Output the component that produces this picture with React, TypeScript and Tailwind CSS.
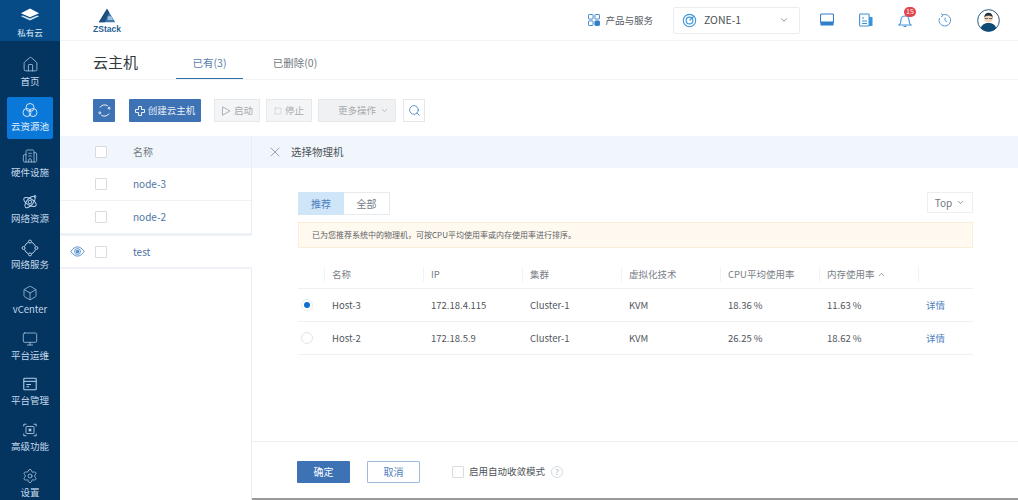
import type { ReactNode } from "react";
import {
  Box,
  Building2,
  ChevronDown,
  ChevronUp,
  Home,
  Monitor,
  Search,
  Settings,
  Square,
  X,
} from "lucide-react";

const FONT = "font-['Noto_Sans_CJK_SC','Noto_Sans',sans-serif]";
const ICON = "#b5d0e8";

function IconRing() {
  return (
    <svg viewBox="0 0 18 18" className="h-[18px] w-[18px]" fill="none" stroke="#cfe3f5" strokeWidth="1">
      <circle cx="9" cy="6.500" r="4" />
      <circle cx="6" cy="11.500" r="4" />
      <circle cx="12" cy="11.500" r="4" />
    </svg>
  );
}

function IconAtom() {
  return (
    <svg viewBox="0 0 18 18" className="h-[18px] w-[18px]" fill="none" stroke={ICON} strokeWidth="1">
      <ellipse cx="9" cy="9" rx="7" ry="3.200" transform="rotate(30 9 9)" />
      <ellipse cx="9" cy="9" rx="7" ry="3.200" transform="rotate(-50 9 9)" />
      <circle cx="9" cy="9" r="1.800" />
      <circle cx="14" cy="3.500" r="1" />
    </svg>
  );
}

function IconNetwork() {
  return (
    <svg viewBox="0 0 18 18" className="h-[18px] w-[18px]" fill="none" stroke={ICON} strokeWidth="1">
      <path d="M5 5 7.500 3M10.500 3 13 5M13 13 10.500 15M7.500 15 5 13M5 5 3.500 7.500M13 5 14.500 7.500M14.500 10.500 13 13M3.500 10.500 5 13" />
      <circle cx="9" cy="2.600" r="1.500" />
      <circle cx="15.400" cy="9" r="1.500" />
      <circle cx="9" cy="15.400" r="1.500" />
      <circle cx="2.600" cy="9" r="1.500" />
    </svg>
  );
}

function IconPanel() {
  return (
    <svg viewBox="0 0 18 18" className="h-[16px] w-[16px]" fill="none" stroke={ICON} strokeWidth="1.200">
      <rect x="2" y="2.500" width="14" height="13" rx="1" />
      <path d="M2 6h14" />
      <path d="M5 9.500h5M5 12h3" />
    </svg>
  );
}

function IconFocus() {
  return (
    <svg viewBox="0 0 18 18" className="h-[16px] w-[16px]" fill="none" stroke={ICON} strokeWidth="1">
      <path d="M2 5V2.500h3M13 2.500h3V5M16 13v2.500h-3M5 15.500H2V13" />
      <rect x="4.500" y="5" width="9" height="8" rx="1" />
      <rect x="8" y="8" width="2" height="2" fill={ICON} />
    </svg>
  );
}

const navItems: { label: string; icon: ReactNode; active?: boolean }[] = [
  { label: "首页", icon: <Home size={17} strokeWidth={1.100} color={ICON} /> },
  { label: "云资源池", icon: <IconRing />, active: true },
  { label: "硬件设施", icon: <Building2 size={16} strokeWidth={1.100} color={ICON} /> },
  { label: "网络资源", icon: <IconAtom /> },
  { label: "网络服务", icon: <IconNetwork /> },
  { label: "vCenter", icon: <Box size={16} strokeWidth={1.100} color={ICON} /> },
  { label: "平台运维", icon: <Monitor size={16} strokeWidth={1.100} color={ICON} /> },
  { label: "平台管理", icon: <IconPanel /> },
  { label: "高级功能", icon: <IconFocus /> },
  { label: "设置", icon: <Settings size={16} strokeWidth={1.100} color={ICON} /> },
];

function Sidebar() {
  return (
    <aside className="flex h-[500px] w-[60px] shrink-0 flex-col items-center overflow-hidden bg-[#043460]">
      <div className="flex h-[41px] w-full shrink-0 flex-col items-center bg-[#064a86] pt-[8px]">
        <svg viewBox="0 0 22 14" className="h-[13px] w-[20px]">
          <path d="M11 .5 21 5.500 11 10 1 5.500Z" fill="#ffffff" />
          <path d="M3 8 11 11.500 19 8 21 9 11 13.500 1 9Z" fill="#d5e4f2" />
        </svg>
        <span className="mt-[5px] text-[8.500px] leading-[12px] text-[#dbe8f4]">私有云</span>
      </div>
      <div className="mt-[8px] flex w-full shrink-0 flex-col items-center">
        {navItems.map((item) =>
          item.active ? (
            <div
              key={item.label}
              className="my-[2px] flex h-[42px] w-[46px] flex-col items-center justify-center rounded-[2px] bg-[#0a78d8] pb-[1px] text-[9.500px] leading-[14px] text-[#e6f1fb]"
            >
              {item.icon}
              <span className="whitespace-nowrap">{item.label}</span>
            </div>
          ) : (
            <div
              key={item.label}
              className="flex h-[45.600px] w-full flex-col items-center justify-center text-[9.500px] leading-[14px] text-[#c3d8ea]"
            >
              <span className="flex h-[18px] items-center">{item.icon}</span>
              <span className="whitespace-nowrap">{item.label}</span>
            </div>
          ),
        )}
      </div>
    </aside>
  );
}

function Header() {
  return (
    <header className="flex h-[41px] shrink-0 items-center border-b border-[#f1f3f5] bg-white">
      <div className="ml-[33px] mt-[1px] flex w-[28px] flex-col items-center">
        <svg viewBox="0 0 24 18" className="h-[15px] w-[18px]">
          <path d="M12 0 23 18H1Z" fill="#3f78ad" />
          <path d="M12 0 15 5 9 18H1Z" fill="#1d4f80" />
          <path d="M13 10h5l2 5h-7Z" fill="#9cc1e0" />
        </svg>
        <span className="mt-[1px] font-['Liberation_Sans',sans-serif] text-[8.500px] font-bold leading-[10px] text-[#2a5f93]">ZStack</span>
      </div>
      <div className="ml-auto flex items-center">
        <svg viewBox="0 0 13 13" className="h-[12px] w-[12px]" fill="none" stroke="#2f7fc9" strokeWidth="1">
          <rect x="0.500" y="0.500" width="5" height="5" rx="0.800" />
          <rect x="7.500" y="0.500" width="5" height="5" rx="0.800" />
          <rect x="0.500" y="7.500" width="5" height="5" rx="0.800" />
          <rect x="7.500" y="7.500" width="5" height="5" rx="0.800" fill="#2f7fc9" />
        </svg>
        <span className="ml-[5px] text-[9.500px] text-[#555b63]">产品与服务</span>
        <div className="ml-[20px] flex h-[27px] w-[127px] items-center rounded-[2px] border border-[#e9edf1] pl-[8px] pr-[10px]">
          <svg viewBox="0 0 16 16" className="h-[15px] w-[15px]" fill="none" stroke="#3d95d8" strokeWidth="1.200">
            <circle cx="8" cy="8" r="6.600" />
            <circle cx="8" cy="8" r="3.600" />
            <path d="M8 8 13 3" />
          </svg>
          <span className="ml-[7px] text-[10.500px] text-[#4b5157]">ZONE-1</span>
          <ChevronDown size={10} className="ml-auto" color="#777" />
        </div>
        <div className="ml-[20px] flex h-[14px] w-[14px] items-center justify-center">
          <svg viewBox="0 0 14 14" className="h-[14px] w-[14px]">
            <rect x="0.500" y="1" width="13" height="9" rx="1" fill="none" stroke="#2f7fc9" strokeWidth="1.100" />
            <rect x="0.500" y="8.500" width="13" height="4" rx="0.500" fill="#2f7fc9" />
          </svg>
        </div>
        <div className="ml-[25px]">
          <svg viewBox="0 0 14 14" className="h-[14px] w-[14px]">
            <rect x="0.600" y="1" width="9.500" height="12" rx="0.800" fill="none" stroke="#3c92d8" strokeWidth="1.100" />
            <rect x="10.100" y="4" width="3.400" height="9" fill="#3c92d8" />
            <path d="M3 5h2M3 8h5M3 10.500h5" stroke="#3c92d8" strokeWidth="1" />
          </svg>
        </div>
        <div className="relative ml-[25px]">
          <svg viewBox="0 0 14 14" className="h-[15px] w-[14px]" fill="none" stroke="#3c92d8" strokeWidth="1.100">
            <path d="M1 11.500c1.500-1 2-2.500 2-5a4 4 0 0 1 8 0c0 2.500.5 4 2 5Z" />
            <path d="M5.500 13h3" />
          </svg>
          <span className="absolute left-[6px] top-[-6px] flex h-[10px] w-[12px] items-center justify-center rounded-full bg-[#e0444c] text-[7px] leading-none text-white">
            15
          </span>
        </div>
        <div className="ml-[26px]">
          <svg viewBox="0 0 14 14" className="h-[14px] w-[14px]" fill="none" stroke="#5a9bd6" strokeWidth="1">
            <path d="M4 2.200A5.800 5.800 0 1 1 1.500 5" />
            <path d="M3 0.500 5 2.400 3 4" />
            <path d="M7 4.500V7.500L9 9" />
          </svg>
        </div>
        <div className="ml-[25px] mr-[18px]">
          <svg viewBox="0 0 24 24" className="h-[23px] w-[23px]">
            <circle cx="12" cy="12" r="11.300" fill="#fff" stroke="#1d4f76" strokeWidth="1" />
            <path d="M4 20c1-4 4-5.500 8-5.500s7 1.500 8 5.500a11 11 0 0 1-16 0Z" fill="#0f4a75" />
            <circle cx="12" cy="10" r="4.300" fill="#f2d7bd" />
            <path d="M7.500 9c0-3.500 2-5 4.500-5s4.500 1.500 4.500 5c-1-1.500-2-2-4.500-2s-3.500.5-4.500 2Z" fill="#23323f" />
            <path d="M8 10h3.500M12.500 10H16" stroke="#333" strokeWidth="0.800" />
          </svg>
        </div>
      </div>
    </header>
  );
}

function Checkbox() {
  return <span className="block h-[12px] w-[12px] rounded-[1px] border border-[#d8dce0] bg-white" />;
}

function ListRow({ name, tall, eye }: { name: string; tall?: boolean; eye?: boolean }) {
  return (
    <div
      className={
        tall
          ? "relative z-10 -mr-px flex h-[35px] items-center border-b-2 border-t-2 border-[#eef2f6] bg-white"
          : "flex h-[33px] items-center border-b border-[#eff2f5] bg-white"
      }
    >
      <span className="flex w-[35px] justify-center">
        {eye && (
          <svg viewBox="0 0 16 12" className="h-[11px] w-[15px]" fill="none" stroke="#4a88c7" strokeWidth="1">
            <path d="M.8 6C3 2.500 5.500 1 8 1s5 1.500 7.200 5C13 9.500 10.500 11 8 11S3 9.500.8 6Z" />
            <circle cx="8" cy="6" r="3.200" />
            <circle cx="8" cy="6" r="1.500" fill="#4a88c7" />
          </svg>
        )}
      </span>
      <Checkbox />
      <span className="mb-[1px] ml-[26px] text-[10px] text-[#4f74a6]">{name}</span>
    </div>
  );
}

const columns = ["名称", "IP", "集群", "虚拟化技术", "CPU平均使用率", "内存使用率"];
const hosts = [
  { name: "Host-3", ip: "172.18.4.115", cluster: "Cluster-1", tech: "KVM", cpu: "18.36 %", mem: "11.63 %", selected: true },
  { name: "Host-2", ip: "172.18.5.9", cluster: "Cluster-1", tech: "KVM", cpu: "26.25 %", mem: "18.62 %", selected: false },
];

function HostTable() {
  return (
    <div className="text-[9.500px]">
      <div className="grid h-[41px] grid-cols-[26px_99px_99px_99px_99px_99px_99px_1fr] items-end border-b border-[#eef1f4] pb-[6px] text-[#7a8087]">
        <span />
        {columns.map((col) => (
          <span key={col} className="flex h-[15px] items-center whitespace-nowrap border-l border-[#f0f2f4] pl-[7px]">
            {col}
            {col === "内存使用率" && <ChevronUp size={9} className="ml-[2px]" />}
          </span>
        ))}
        <span className="h-[15px] border-l border-[#f0f2f4]" />
      </div>
      {hosts.map((host) => (
        <div
          key={host.name}
          className="grid h-[33px] grid-cols-[26px_99px_99px_99px_99px_99px_99px_1fr] items-center border-b border-[#eef1f4] text-[#50565c]"
        >
          <span className="pl-[3px]">
            {host.selected ? (
              <span className="flex h-[12px] w-[12px] items-center justify-center rounded-full border border-[#e6edf5]">
                <span className="h-[6px] w-[6px] rounded-full bg-[#0f6fcf]" />
              </span>
            ) : (
              <span className="block h-[12px] w-[12px] rounded-full border border-[#e2e5e8]" />
            )}
          </span>
          <span className="pl-[8px]">{host.name}</span>
          <span className="pl-[8px]">{host.ip}</span>
          <span className="pl-[8px]">{host.cluster}</span>
          <span className="pl-[8px]">{host.tech}</span>
          <span className="pl-[8px]">{host.cpu}</span>
          <span className="pl-[8px]">{host.mem}</span>
          <span className="pl-[8px] text-[#4f7fbd]">详情</span>
        </div>
      ))}
    </div>
  );
}

function DetailPanel() {
  return (
    <section className="flex min-w-0 flex-1 flex-col bg-white">
      <div className="flex h-[32px] shrink-0 items-center bg-[#f0f6fb] pl-[15px]">
        <X size={16} strokeWidth={1} color="#6f7880" />
        <span className="ml-[8px] text-[10.500px] text-[#4d5359]">选择物理机</span>
      </div>
      <div className="flex-1 pl-[46px] pr-[45px] pt-[24px]">
        <div className="flex items-start justify-between">
          <div className="flex h-[23px] text-[10px]">
            <span className="flex w-[46px] items-center justify-center bg-[#cfe5f8] text-[#4f7fbd]">推荐</span>
            <span className="flex w-[46px] items-center justify-center border border-l-0 border-[#e8ebee] text-[#73797f]">全部</span>
          </div>
          <span className="flex h-[21px] w-[46px] items-center justify-center gap-[4px] border border-[#eceff2] text-[10px] text-[#73797f]">
            Top
            <ChevronDown size={9} />
          </span>
        </div>
        <div className="mt-[7px] flex h-[26px] items-center border border-[#faeed8] bg-[#fff9ef] pl-[13px] text-[8px] text-[#5d6166]">
          已为您推荐系统中的物理机，可按CPU平均使用率或内存使用率进行排序。
        </div>
        <HostTable />
      </div>
      <div className="flex h-[57px] shrink-0 items-center border-t border-[#eceff2] pl-[45px] pt-[3px]">
        <span className="flex h-[22px] w-[53px] items-center justify-center rounded-[1px] bg-[#3d72b4] text-[10px] text-white">确定</span>
        <span className="ml-[17px] flex h-[22px] w-[53px] items-center justify-center rounded-[1px] border border-[#9db8d8] text-[10px] text-[#4f7fbd]">取消</span>
        <span className="ml-[32px]">
          <Checkbox />
        </span>
        <span className="ml-[5px] text-[9.500px] text-[#4d5359]">启用自动收敛模式</span>
        <span className="ml-[6px] flex h-[12px] w-[12px] items-center justify-center rounded-full border border-[#d8dce0] text-[8px] leading-none text-[#b0b5ba]">?</span>
      </div>
      <div className="h-[2px] shrink-0 bg-[#9a9a9a]" />
    </section>
  );
}

export default function App() {
  return (
    <div className={`flex h-[500px] w-[1018px] overflow-hidden bg-white ${FONT}`}>
      <Sidebar />
      <main className="flex min-w-0 flex-1 flex-col">
        <Header />
        <div className="flex h-[39px] shrink-0 items-stretch border-b border-[#f1f3f5]">
          <h1 className="ml-[33px] self-center pt-[4px] text-[15px] font-normal text-[#33383d]">云主机</h1>
          <span className="ml-[38px] flex w-[67px] items-center justify-center border-b border-[#2f6ca8] pt-[6px] text-[10.500px] text-[#5c80ad]">已有(3)</span>
          <span className="ml-[16px] flex w-[72px] items-center justify-center pt-[6px] text-[10.500px] text-[#73797f]">已删除(0)</span>
        </div>
        <div className="flex h-[56px] shrink-0 items-center pl-[33px] pt-[5px]">
          <span className="flex h-[23px] w-[22px] items-center justify-center rounded-[1px] bg-[#3d72b4]">
            <svg viewBox="0 0 14 14" className="h-[13px] w-[13px]" fill="none" stroke="#fff" strokeWidth="1">
              <path d="M2 3.800A6 6 0 0 1 10.500 2M12 10.200A6 6 0 0 1 3.500 12" />
              <circle cx="12" cy="4.500" r="1" />
              <circle cx="2" cy="9.500" r="1" />
            </svg>
          </span>
          <span className="ml-[14px] flex h-[23px] w-[72px] items-center justify-center gap-[3px] rounded-[1px] bg-[#3d72b4] text-[9.500px] text-[#e8f0f8]">
            <svg viewBox="0 0 10 10" className="h-[10px] w-[10px]" fill="none" stroke="#fff" strokeWidth="0.900">
              <path d="M3.500.5h3v3h3v3h-3v3h-3v-3h-3v-3h3Z" />
            </svg>
            创建云主机
          </span>
          <span className="ml-[13px] flex h-[23px] w-[46px] items-center justify-center gap-[3px] border border-[#e6e8ea] bg-[#f4f5f6] text-[9.500px] text-[#a6abb0]">
            <svg viewBox="0 0 10 10" className="h-[10px] w-[10px]" fill="none" stroke="#a6abb0" strokeWidth="0.900">
              <path d="M1.500.8 9 5 1.500 9.200Z" />
            </svg>
            启动
          </span>
          <span className="ml-[6px] flex h-[23px] w-[46px] items-center justify-center gap-[3px] border border-[#e6e8ea] bg-[#f4f5f6] text-[9.500px] text-[#a6abb0]">
            <Square size={8} strokeWidth={1.200} />
            停止
          </span>
          <span className="ml-[6px] flex h-[23px] w-[78px] items-center justify-end gap-[4px] border border-[#e6e8ea] bg-[#f0f1f2] pr-[6px] text-[9.500px] text-[#a6abb0]">
            更多操作
            <ChevronDown size={9} />
          </span>
          <span className="ml-[7px] flex h-[23px] w-[22px] items-center justify-center border border-[#e3e8ed]">
            <Search size={13} strokeWidth={1.500} color="#3d7fc4" />
          </span>
        </div>
        <div className="flex min-h-0 flex-1">
          <div className="flex w-[192px] shrink-0 flex-col border-r border-[#e9edf1]">
            <div className="flex h-[32px] shrink-0 items-center bg-[#f0f6fb] pl-[35px]">
              <Checkbox />
              <span className="mb-[1px] ml-[26px] text-[10px] text-[#73797f]">名称</span>
            </div>
            <ListRow name="node-3" />
            <ListRow name="node-2" />
            <ListRow name="test" tall eye />
          </div>
          <DetailPanel />
        </div>
      </main>
    </div>
  );
}
